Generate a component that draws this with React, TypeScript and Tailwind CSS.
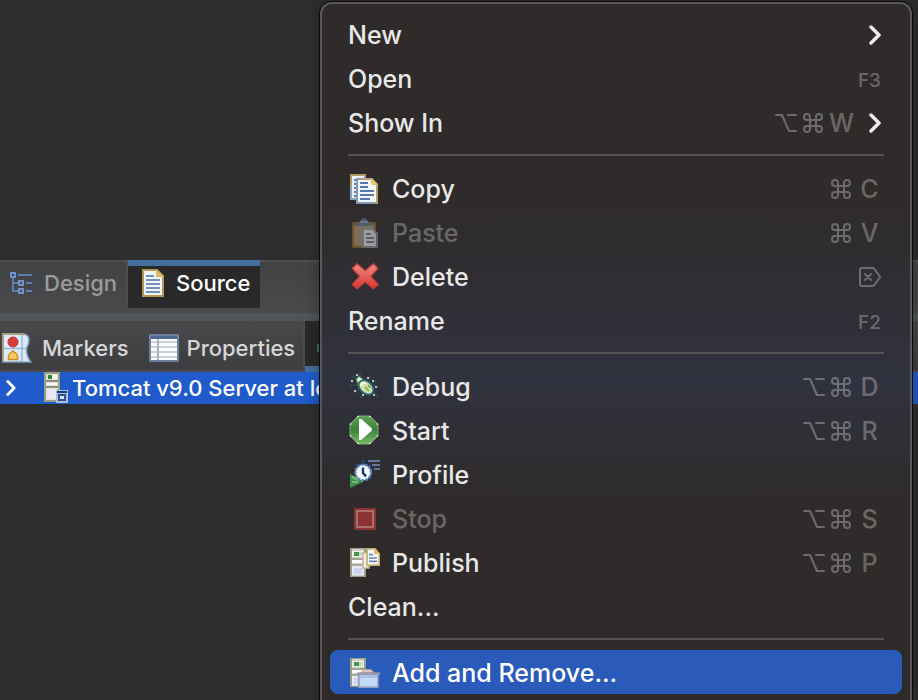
import type { ReactNode } from "react";

const crisp = { viewBox: "0 0 16 16", "aria-hidden": true, className: "size-8 shrink-0" } as const;

function ServerTower() {
  return (
    <>
      <rect x="1" y="1" width="8" height="14.500" fill="#9a9e88" />
      <rect x="2" y="1.500" width="6" height="13.500" fill="#cfd2c2" />
      <rect x="2" y="2.500" width="6" height="3" fill="#eff3ee" />
      <rect x="3" y="3" width="2.500" height="2" fill="#3f9a42" />
      <rect x="5.500" y="3" width="2" height="2" fill="#c9d8d2" />
      <rect x="2" y="6" width="6" height="1" fill="#a1a592" />
      <rect x="2" y="7" width="6" height="1.500" fill="#fafaff" />
      <rect x="2" y="9" width="6" height="1" fill="#a8ac9a" />
      <rect x="2" y="10" width="6" height="4.500" fill="#e6e7f6" />
      <rect x="3" y="11" width="4" height="3" fill="#cfd2ee" />
    </>
  );
}

function CopyIcon() {
  return (
    <svg {...crisp}>
      <path d="M1 1h8v3H5v10H1z" fill="#8ba3bf" />
      <path d="M1 1h8v1H2v5H1z" fill="#b39a62" />
      <path d="M2 2h6v2H5v9H2z" fill="#e8f1fa" />
      <path d="M3 4h1.500M3 6h1.500M3 8h1.500M3 10h1.500M3 12h1.500" stroke="#5e80ad" strokeWidth="1" />
      <path d="M4 3h8l3 3v10H4z" fill="#8099b5" />
      <path d="M4.500 3H12l3 3v10h-1V6z" fill="#b9a06a" />
      <path d="M5 4h6.500L14 6.500V15H5z" fill="#f2f8fd" />
      <path d="M11.500 3l3.500 3.500h-3.500z" fill="#e8c468" />
      <path d="M6 5.500h4M6 7.500h4M6 9.500h7M6 11.500h7M6 13.500h5" stroke="#5379ad" strokeWidth=".9" />
    </svg>
  );
}

function PasteIcon() {
  return (
    <svg {...crisp}>
      <g opacity=".6">
        <rect x="2" y="3" width="12" height="13" rx="1" fill="#94682f" />
        <rect x="3" y="4.500" width="10" height="10.500" fill="#b39878" />
        <path d="M4 5c0-2 2-1.500 2.500-3.200Q6.800 1 8 1t1.500.8C10 3.500 12 3 12 5z" fill="#6a7794" />
        <path d="M6 3.500h4v-1H6.500z" fill="#9aa6c0" />
      </g>
      <g opacity=".72">
        <path d="M7 6h5.500L15 8.500V16H7z" fill="#6a737c" />
        <path d="M8 7h4l2 2v6H8z" fill="#a9b1b8" />
        <path d="M9 9h2.500M9 11h4M9 13h4" stroke="#445976" strokeWidth=".9" />
      </g>
    </svg>
  );
}

function DeleteIcon() {
  return (
    <svg {...crisp}>
      <defs>
        <linearGradient id="deleteFill" x2="0" y2="1">
          <stop offset="0" stopColor="#e88c83" />
          <stop offset="1" stopColor="#dc3535" />
        </linearGradient>
      </defs>
      <path
        d="M4.500 1.900L8.600 5.400l4.100-3.500L15 4.200l-3.600 4 3.600 4-2.300 2.200-4.100-3.500-4.100 3.500-2.300-2.200 3.600-4-3.600-4z"
        fill="url(#deleteFill)"
        stroke="#cc3d38"
        strokeWidth=".7"
        strokeLinejoin="round"
      />
    </svg>
  );
}

function DebugIcon() {
  return (
    <svg {...crisp}>
      <path
        d="M6 1v2M2 3l2 1.500M1 8l4-.5M3 12l3-3M6.500 14l1-2M11 3.500L10 5M14 5l-2 1.500M13 8l2.500.5M13 11.500l2 1.500"
        stroke="#2a5a3d"
        strokeWidth=".8"
        strokeDasharray="1 .5"
      />
      <path d="M1.500 5.500h1M4 2.500h1M9.500 4h1M3 10.500h1M7 12.500h1M13.500 8.500h1M12.500 12.500h1M12 5.500h1" stroke="#b3c4b8" strokeWidth="1" />
      <path d="M4 4.500L5.500 3l2 1.500-.5 2-2 1z" fill="#e4edcf" stroke="#367457" strokeWidth=".6" />
      <ellipse cx="9" cy="8.700" rx="4.200" ry="2.900" transform="rotate(42 9 8.700)" fill="#d3e3a6" stroke="#2b6c7c" strokeWidth=".9" />
      <path d="M6.500 8q.5-2 2.500-1.500" stroke="#fbffe6" fill="none" strokeWidth="1" />
      <path d="M8.500 8.500l2 2M10 7.500l1.200 1.500" stroke="#7ba04c" strokeWidth=".7" />
    </svg>
  );
}

function StartIcon() {
  return (
    <svg {...crisp}>
      <defs>
        <linearGradient id="startFill" x2="0" y2="1">
          <stop offset="0" stopColor="#5f9d55" />
          <stop offset=".5" stopColor="#3d8238" />
          <stop offset="1" stopColor="#79bb69" />
        </linearGradient>
      </defs>
      <path d="M5 1h6l4 4v6l-4 4H5l-4-4V5z" fill="url(#startFill)" stroke="#7fae78" strokeWidth=".5" />
      <path
        d="M4.500 1.300h1M10.500 1.300h1M4.500 14.700h1M10.500 14.700h1M1.300 4.500v1M1.300 10.500v1M14.700 4.500v1M14.700 10.500v1"
        stroke="#d9e8d5"
        strokeWidth=".6"
      />
      <path d="M5.500 2.500V13h1L12 8.200V7.200L6.700 2.500z" fill="#fff" />
    </svg>
  );
}

function ProfileIcon() {
  return (
    <svg {...crisp}>
      <path d="M1 8l6.500 3v1L1 15z" fill="#3f9150" />
      <path d="M2 9.500l3 1.500M2 12h3" stroke="#78ba77" strokeWidth="1" />
      <circle cx="7.600" cy="7.200" r="3.900" fill="#f7fbff" stroke="#5f8ac4" strokeWidth="1.200" strokeDasharray="1.300 .6" />
      <path d="M7.500 4.800v2.700l1.500 1.700" stroke="#193b7c" strokeWidth="1.200" fill="none" />
      <path d="M6.500 1.500h2M7.500 1v2M3.500 3.500h1.500M10.500 3.500h1" stroke="#1d477e" strokeWidth="1" />
      <path d="M10 1.500h6M12 3.500h4M13 5.500h3" stroke="#65779f" strokeWidth="1" />
    </svg>
  );
}

function StopIcon() {
  return (
    <svg {...crisp}>
      <rect x="3" y="3" width="11" height="11" fill="#8a3334" />
      <rect x="4.500" y="4.500" width="8" height="8" fill="#8c3234" stroke="#a8706c" strokeWidth="1" />
    </svg>
  );
}

function PublishIcon() {
  return (
    <svg {...crisp}>
      <ServerTower />
      <path d="M7.500 3.500h3V11h-3z" fill="#f3f0e6" stroke="#c6b894" strokeWidth=".8" />
      <path d="M9.500 1.400h4L15.600 4v5.600H9.500z" fill="#f7f9fc" stroke="#c8b078" strokeWidth=".9" />
      <path d="M13 1l3 3h-3z" fill="#dfbd6c" />
      <path d="M10.500 4.300h2M10.500 6h4M10.500 7.700h4" stroke="#6887b5" strokeWidth=".8" />
    </svg>
  );
}

function ModuleIcon() {
  return (
    <svg {...crisp}>
      <ServerTower />
      <path d="M6.500 8.300l1.500-1.500h3.500L13 8.300z" fill="#dccabe" stroke="#b59d8c" strokeWidth=".5" />
      <path d="M4.500 8.200H16v1.200H4.500z" fill="#a59aa0" />
      <path d="M5.400 9.200H15v6.400H5.400z" fill="#c1daf5" stroke="#8d9cbb" strokeWidth=".8" />
      <path d="M6 9.700h8.500v1.300H6z" fill="#a9c2e2" />
    </svg>
  );
}

function TreeIcon() {
  return (
    <svg viewBox="0 0 24 24" aria-hidden className="size-6 shrink-0" fill="none" stroke="#5c7db4" strokeWidth="2">
      <path d="M4 6v14h5M4 12h5M9 4h14M17 12h6M17 20h6" />
      <rect x="2" y="2" width="4" height="4" stroke="#6f94cb" />
      <rect x="10" y="10" width="4" height="4" stroke="#6f94cb" />
      <rect x="10" y="18" width="4" height="4" stroke="#6f94cb" />
    </svg>
  );
}

function PageIcon() {
  return (
    <svg viewBox="0 0 24 30" aria-hidden className="h-[30px] w-6 shrink-0">
      <path d="M2 2h14l6 6v20H2z" fill="#f0f5fb" stroke="#b4965a" strokeWidth="2" />
      <path d="M15 1v8h8z" fill="#e0b862" />
      <path d="M5 8h8M5 12h14M5 16h14M5 20h14M5 24h14" stroke="#7790bb" strokeWidth="2" />
    </svg>
  );
}

function MarkersIcon() {
  return (
    <svg viewBox="0 0 30 30" aria-hidden className="size-[30px] shrink-0">
      <path d="M1 1h21q5 1 5 6 0 4-2 7-1 3 0 7 1 5 4 8H1z" fill="#dcebf8" stroke="#7f9cc0" strokeWidth="1.500" />
      <path d="M1 29V1h21" fill="none" stroke="#a99f78" strokeWidth="2" />
      <path d="M2 15.500h23M20 2v26" stroke="#9cb6d4" strokeWidth="1.500" />
      <circle cx="11" cy="9" r="5" fill="#da3c39" stroke="#bb3030" />
      <path d="M6.500 26.500v-4q1-2 4.500-4.500 3.500 2.500 4.500 4.500v4z" fill="#f6c963" stroke="#d28b26" strokeWidth="1.500" />
    </svg>
  );
}

function TableIcon() {
  return (
    <svg viewBox="0 0 30 28" aria-hidden className="h-7 w-[30px] shrink-0">
      <rect x="1" y="1" width="28" height="26" fill="#fbfcfe" stroke="#6d809f" strokeWidth="2" />
      <path d="M2 3.500h26" stroke="#4c6790" strokeWidth="3" />
      <path d="M2 8h26M2 13h26M2 18h26M2 23h26" stroke="#cbd0da" strokeWidth="2" />
      <path d="M9 5v21" stroke="#a9b3c6" strokeWidth="2" />
    </svg>
  );
}

function ServerIcon() {
  return (
    <svg viewBox="0 0 24 32" aria-hidden className="h-8 w-6 shrink-0">
      <rect width="16" height="30" fill="#9ba080" />
      <rect x="2" y="2" width="12" height="26" fill="#dfe2d9" />
      <rect x="4" y="3" width="4" height="4" fill="#268735" />
      <rect x="8" y="3" width="5" height="4" fill="#f6f8fa" />
      <path d="M2 9h12M2 15h12" stroke="#8b9079" strokeWidth="2" />
      <path d="M3 12h10" stroke="#fafaff" strokeWidth="2" />
      <rect x="3" y="17" width="9" height="10" fill="#e8e8fa" />
      <rect x="12" y="18" width="12" height="13" fill="#a9bfdd" />
      <rect x="13" y="19" width="10" height="2" fill="#173d7f" />
      <rect x="15" y="23" width="6" height="5" fill="#dce8f7" stroke="#2e538e" strokeWidth="2" />
    </svg>
  );
}

function Chevron({ className }: { className: string }) {
  return (
    <svg viewBox="0 0 12 20" aria-hidden className={`shrink-0 ${className}`} fill="none" stroke="currentColor" strokeWidth="3.500" strokeLinecap="round" strokeLinejoin="round">
      <path d="M2 2l8 8-8 8" />
    </svg>
  );
}

function ForwardDelete() {
  return (
    <svg viewBox="0 0 22 20" role="img" aria-label="Forward delete" className="h-5 w-[22px]" fill="none" stroke="currentColor" strokeWidth="2" strokeLinejoin="round" strokeLinecap="round">
      <path d="M3 1h10.500q1 0 1.700.8L20.500 9q.7 1 0 2l-5.300 7.200q-.7.800-1.700.8H3q-2 0-2-2V3q0-2 2-2z" />
      <path d="M6 7l6 6M12 7l-6 6" />
    </svg>
  );
}

function OptionKey() {
  return (
    <svg viewBox="0 0 22 20" role="img" aria-label="Option" className="h-5 w-[22px]" fill="none" stroke="currentColor" strokeWidth="2" strokeLinecap="round" strokeLinejoin="round">
      <path d="M1 2h6l7 16h7M13 2h8" />
    </svg>
  );
}

function CommandKey() {
  return (
    <svg viewBox="0 0 20 20" role="img" aria-label="Command" className="size-5" fill="none" stroke="currentColor" strokeWidth="2">
      <path d="M7 7V4a3 3 0 1 0-3 3h12a3 3 0 1 0-3-3v12a3 3 0 1 0 3-3H4a3 3 0 1 0 3 3z" />
    </svg>
  );
}

type Item = {
  label: string;
  icon?: ReactNode;
  letter?: string;
  option?: boolean;
  fn?: string;
  forwardDelete?: boolean;
  submenu?: boolean;
  disabled?: boolean;
  active?: boolean;
};

const groups: Item[][] = [
  [
    { label: "New", submenu: true },
    { label: "Open", fn: "F3" },
    { label: "Show In", letter: "W", option: true, submenu: true },
  ],
  [
    { label: "Copy", icon: <CopyIcon />, letter: "C" },
    { label: "Paste", icon: <PasteIcon />, letter: "V", disabled: true },
    { label: "Delete", icon: <DeleteIcon />, forwardDelete: true },
    { label: "Rename", fn: "F2" },
  ],
  [
    { label: "Debug", icon: <DebugIcon />, letter: "D", option: true },
    { label: "Start", icon: <StartIcon />, letter: "R", option: true },
    { label: "Profile", icon: <ProfileIcon /> },
    { label: "Stop", icon: <StopIcon />, letter: "S", option: true, disabled: true },
    { label: "Publish", icon: <PublishIcon />, letter: "P", option: true },
    { label: "Clean..." },
  ],
  [{ label: "Add and Remove...", icon: <ModuleIcon />, active: true }],
];

function MenuRow({ item }: { item: Item }) {
  const tone = item.active ? "rounded-lg bg-[#2a5aba] text-white" : item.disabled ? "text-white/30" : "text-[#e8e8e8]";
  return (
    <button
      type="button"
      role="menuitem"
      disabled={item.disabled}
      className={`flex h-11 w-full items-center px-[18px] text-left text-[25px] font-medium leading-8 ${tone}`}
    >
      {item.icon && <span className="mr-3">{item.icon}</span>}
      <span className="flex-1 whitespace-nowrap pt-px">{item.label}</span>
      <span className="flex items-center pt-px text-white/30">
        {item.option && <span className="flex w-[26px] justify-center"><OptionKey /></span>}
        {item.letter && (
          <>
            <span className="flex w-7 justify-center"><CommandKey /></span>
            <span className="w-[29px] text-center">{item.letter}</span>
          </>
        )}
        {item.fn && <span className="pr-[3px] pt-1 text-[19px] leading-6">{item.fn}</span>}
        {item.forwardDelete && <span className="pr-[3px]"><ForwardDelete /></span>}
      </span>
      {item.submenu && <span className="flex w-7 justify-end pr-[3px] pt-0.5 text-[#ececec]"><Chevron className="h-5 w-3" /></span>}
    </button>
  );
}

export default function App() {
  return (
    <div className="relative flex h-screen flex-col overflow-hidden bg-[#2e2e2e] font-['Inter',sans-serif] text-[22px] font-medium leading-7 text-[#d6d6d6]">
      <main className="h-[260px] shrink-0" />

      <div role="tablist" aria-label="Editor pages" className="flex h-[53px] shrink-0 items-start border-t-2 border-[#4f4f50] bg-linear-to-b from-[#414244] to-[#4a4a4c]">
        <button type="button" role="tab" aria-selected={false} className="flex h-[46px] w-32 items-center gap-[11px] border-r-2 border-[#4d4e50] pl-[9px] pb-1 text-[#9c9c9c]">
          <TreeIcon />
          Design
        </button>
        <button type="button" role="tab" aria-selected className="-mt-0.5 flex h-12 w-[132px] items-center gap-[11px] border-t-6 border-[#426f9b] bg-[#292929] pl-[13px] pb-2 text-white">
          <PageIcon />
          Source
        </button>
      </div>
      <div className="h-2 shrink-0 bg-[#4f5556]" />

      <div role="tablist" aria-label="Views" className="flex h-[51px] shrink-0 border-b-2 border-[#4a4a4b] bg-linear-to-b from-[#48484a] to-[#3e3e40]">
        <button type="button" role="tab" aria-selected={false} className="flex items-center gap-[10px] pl-0.5 pt-1">
          <MarkersIcon />
          Markers
        </button>
        <button type="button" role="tab" aria-selected={false} className="flex items-center gap-2 border-r-2 border-[#4d4d4f] pl-5 pr-2 pt-1">
          <TableIcon />
          Properties
        </button>
        <button type="button" role="tab" aria-selected aria-label="Servers" className="-mb-0.5 flex w-40 items-center border-b-6 border-[#426f9b] bg-[#292929] pl-3 pt-2">
          <span className="h-2 w-4 bg-[#3e7659]" />
        </button>
      </div>

      <div role="treeitem" aria-selected className="flex h-8 shrink-0 items-center whitespace-nowrap bg-[#1f5bca] pl-[6px] text-white">
        <Chevron className="h-4 w-[10px]" />
        <span className="ml-7 mr-1"><ServerIcon /></span>
        Tomcat v9.0 Server at lo
      </div>

      <div
        role="menu"
        className="absolute bottom-0 left-80 right-1.5 top-0.5 rounded-t-xl border-2 border-b-0 border-[#5a5756] bg-linear-to-b from-[#2f2b2a] from-28% via-[#30323f] via-54% to-[#2f2b2a] to-72% px-2 pt-2 shadow-[0_0_0_1px_#0b0b0b,0_0_16px_#00000060]"
      >
        {groups.map((items, index) => (
          <div key={index} role="group">
            {index > 0 && <hr className="mx-[18px] my-[10px] border-t-2 border-[#555252]" />}
            {items.map((item) => (
              <MenuRow key={item.label} item={item} />
            ))}
          </div>
        ))}
      </div>
    </div>
  );
}
